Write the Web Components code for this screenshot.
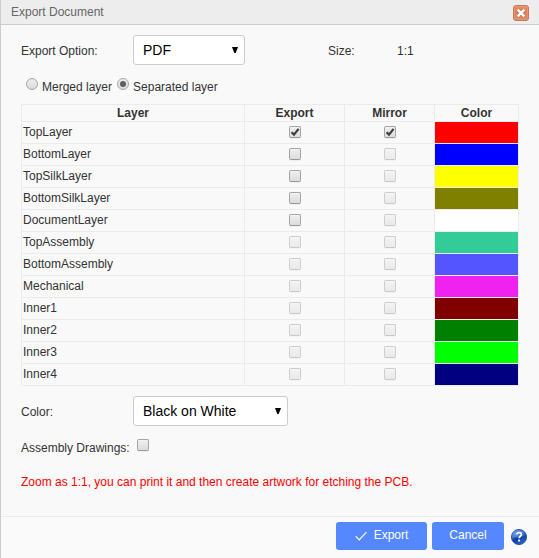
<!DOCTYPE html>
<html lang="en">
<head>
<meta charset="utf-8">
<title>Export Document</title>
<style>
html,body{margin:0;height:100%;overflow:hidden}
body{font:12px/16px "Liberation Sans",Arial,sans-serif;color:#333;background:#f9f9f9}
</style>
</head>
<body>
<export-dialog></export-dialog>
<script>
function define(name, render) {
  customElements.define(name, class extends HTMLElement {
    connectedCallback() {
      if (this.shadowRoot) return;
      this.attachShadow({ mode: 'open' }).innerHTML = render(this);
    }
  });
}

define('close-icon', () => `<style>:host{display:block;width:16px;height:16px}svg{display:block}</style>
<svg width="16" height="16" viewBox="0 0 16 16">
<defs><linearGradient id="g" x1="0" y1="0" x2="0" y2="1"><stop offset="0" stop-color="#e88e62"/><stop offset=".5" stop-color="#e0805f"/><stop offset="1" stop-color="#d59068"/></linearGradient></defs>
<rect x=".5" y=".5" width="15" height="15" rx="2.5" fill="url(#g)" stroke="#c17763"/>
<rect x="1.5" y="1.5" width="13" height="13" rx="1.5" fill="none" stroke="#f2a06c" stroke-opacity=".6"/>
<path d="M5 5l6 6M11 5l-6 6" stroke="#b0604a" stroke-opacity=".45" stroke-width="4.4"/>
<path d="M4.7 4.7l6.6 6.6M11.3 4.7l-6.6 6.6" stroke="#fff" stroke-width="2.5"/></svg>`);

define('help-icon', () => `<style>:host{display:block;width:16px;height:16px}svg{display:block}</style>
<svg width="16" height="16" viewBox="0 0 16 16">
<defs><linearGradient id="g" x1="0" y1="0" x2=".6" y2="1"><stop offset="0" stop-color="#6ea6ec"/><stop offset=".45" stop-color="#2f6ccb"/><stop offset=".6" stop-color="#0c3c98"/><stop offset="1" stop-color="#2468d4"/></linearGradient></defs>
<circle cx="8" cy="8" r="7.6" fill="url(#g)" stroke="#173f9c" stroke-width=".8"/>
<path d="M1.5 7a6.6 6 0 0 1 13-1Q10 9.5 1.5 8z" fill="#8dbcf5" opacity=".35"/>
<path d="M5.7 5.6c0-2.7 4.7-2.6 4.7-.1 0 1.7-2.3 1.8-2.3 3.7" fill="none" stroke="#fff" stroke-width="1.7"/><rect x="7.1" y="10.6" width="2" height="2" rx=".5" fill="#fff"/></svg>`);

define('check-box', el => `<style>
:host{display:block;width:12px;height:12px}
.b{box-sizing:border-box;width:12px;height:12px;border:1px solid #a4a4a4;border-bottom-color:#999;border-radius:2px;background:linear-gradient(#eee,#dcdcdc);box-shadow:0 1px 0 #eee,inset 0 1px 1px #f4f4f4}
:host([disabled]) .b{opacity:.5}
svg{display:block;margin:-1px}
</style><div class="b">${el.hasAttribute('checked') ? '<svg width="12" height="12"><path d="M2.6 6.2L5 8.6L9.6 2.9" fill="none" stroke="#3c3c3c" stroke-width="2.2"/></svg>' : ''}</div>`);

define('radio-option', () => `<style>
:host{display:flex;height:16px}
.r{box-sizing:border-box;width:12px;height:12px;margin-right:4px;border:1px solid #a6a6a6;border-radius:50%;background:linear-gradient(#eee,#dcdcdc);display:grid;place-items:center}
:host([checked]) .r::after{content:"";width:6px;height:6px;border-radius:50%;background:#606060}
span{padding-top:1px}
</style><div class="r"></div><span><slot></slot></span>`);

define('select-box', () => `<style>
:host{display:flex;box-sizing:border-box;height:30px;border:1px solid #ccc;border-radius:3px;background:#fff;color:#000;font-size:14px;align-items:center;justify-content:space-between;padding:0 6px 0 9px}
svg{display:block}
</style><span><slot></slot></span><svg width="6" height="6"><path d="M0 0h6L3.7 6H2.3z"/></svg>`);

define('push-button', () => `<style>
:host{display:flex;box-sizing:border-box;height:28px;border-radius:3px;background:#5588ff;color:#fff;align-items:center;justify-content:center;padding-bottom:2px}
</style><slot></slot>`);

define('layer-row', el => {
  const color = el.getAttribute('color');
  const on = el.hasAttribute('on');
  return `<style>
:host{display:grid;grid-template-columns:223px 100px 90px 84px;height:21px;border-bottom:1px solid #ebebeb}
div{box-sizing:border-box;border-right:1px solid #ebebeb;display:flex;justify-content:center}
.n{justify-content:flex-start;padding:2px 0 0 1px}
check-box{margin-top:4px}
</style><div class="n"><slot></slot></div>
<div><check-box ${on ? 'checked' : ''} ${el.hasAttribute('locked') ? 'disabled' : ''}></check-box></div>
<div><check-box ${on ? 'checked' : 'disabled'}></check-box></div>
<div style="background:${color}"></div>`;
});

define('layer-table', () => `<style>
:host{display:block;box-sizing:border-box;width:498px;border:solid #ebebeb;border-width:1px 0 0 1px}
.h{display:grid;grid-template-columns:223px 100px 90px 84px;height:16px;border-bottom:1px solid #ebebeb;font-weight:bold;text-align:center}
.h span{border-right:1px solid #ebebeb}
</style><div class="h"><span>Layer</span><span>Export</span><span>Mirror</span><span>Color</span></div>
${[['TopLayer','red','on'],['BottomLayer','blue',''],['TopSilkLayer','yellow',''],['BottomSilkLayer','olive',''],['DocumentLayer','white',''],['TopAssembly','#33cc99','locked'],['BottomAssembly','#5555ff','locked'],['Mechanical','#f022f0','locked'],['Inner1','maroon','locked'],['Inner2','green','locked'],['Inner3','lime','locked'],['Inner4','navy','locked']]
  .map(([n, c, f]) => `<layer-row color="${c}" ${f}>${n}</layer-row>`).join('')}`);

define('export-dialog', () => `<style>
:host{display:flex;flex-direction:column;box-sizing:border-box;height:558px;border-left:1px solid #ccc;background:#f9f9f9}
header{display:flex;justify-content:space-between;box-sizing:border-box;height:25px;background:#ededed;border-bottom:1px solid #ccc;padding:4px 10px 0 10px;color:#666}
close-icon{margin-top:1px}
main{flex:1;padding:10px 20px 0}
.line{display:flex;align-items:center;height:30px}
.line>span{width:112px;padding-top:2px}
.size{margin-left:83px;width:69px!important}
.radios{display:flex;gap:5px;padding:13px 0 0 5px;height:26px}
.assembly{display:flex;height:16px;margin:14px 0 18px;gap:7px}
.assembly check-box{margin-top:-1px}
p{margin:0;color:#f00}
footer{box-sizing:border-box;height:42px;border-top:1px solid #ebebeb;background:#fafafa;display:flex;justify-content:flex-end;padding:5px 12px 0 0}
push-button+push-button{margin-left:5px}
push-button svg{margin:2px 7px 0 0}
help-icon{margin:7px 0 0 7px}
</style>
<header><span class="title">Export Document</span><close-icon></close-icon></header>
<main>
<div class="line"><span>Export Option:</span><select-box style="width:112px">PDF</select-box><span class="size">Size:</span><span>1:1</span></div>
<div class="radios"><radio-option>Merged layer</radio-option><radio-option checked>Separated layer</radio-option></div>
<layer-table></layer-table>
<div class="line" style="margin-top:10px"><span>Color:</span><select-box style="width:155px">Black on White</select-box></div>
<div class="assembly"><span>Assembly Drawings:</span><check-box></check-box></div>
<p>Zoom as 1:1, you can print it and then create artwork for etching the PCB.</p>
</main>
<footer><push-button style="width:91px"><svg width="12" height="10"><path d="M.7 5.2l3.5 3.6L11.4 1.2" fill="none" stroke="#fff" stroke-width="1.2"/></svg>Export</push-button><push-button style="width:72px">Cancel</push-button><help-icon></help-icon></footer>`);
</script>
</body>
</html>
